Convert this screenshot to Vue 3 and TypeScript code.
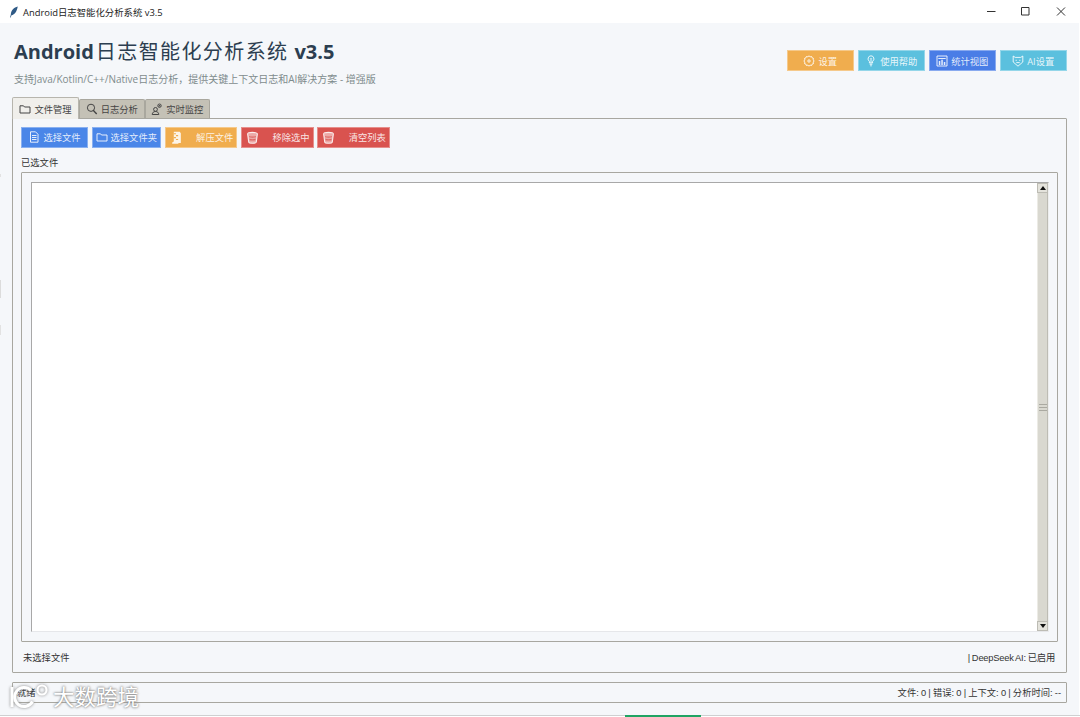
<script setup lang="ts">
const icons: Record<string, string> = {
  file: 'M2.500 .8h5l2.500 2.500v7.900H2.500zM4 4.500h4.500M4 6.500h4.500M4 8.500h4.500',
  folder: 'M1 2.800h3.500l1 1.200H11v6H1z',
  search: 'M5 1.200a3.600 3.600 0 1 0 0 7.200a3.600 3.600 0 0 0 0-7.200z',
  monitor: 'M4.500 4.500a1.900 1.900 0 1 0 0 3.800a1.900 1.900 0 0 0 0-3.800zM1.200 11.500c.2-2 1.300-3 3.300-3s3.100 1 3.300 3zM8.500 1a1.700 1.700 0 1 0 0 3.400a1.700 1.700 0 0 0 0-3.400z',
  zip: 'M3.500 .8h5.500l1 1.300v8.900H8l-.5.8H2v-1.200l1.500-.8z',
  trash: 'M1.500 2.800c0-2 9-2 9 0l-1 7.400c-.4 1.400-6.600 1.400-7 0z',
  gear: 'M6 .8l1.100 1 1.500-.3.500 1.400 1.400.5-.3 1.500 1 1.100-1 1.100.3 1.500-1.400.5-.5 1.400-1.500-.3-1.100 1-1.100-1-1.500.3-.5-1.400-1.400-.5.3-1.500-1-1.100 1-1.100-.3-1.500 1.400-.5.5-1.400 1.500.3zM6 4.800a1.200 1.200 0 1 0 0 2.400a1.200 1.200 0 0 0 0-2.400z',
  bulb: 'M6 .8a3 3 0 0 0-1.600 5.500V8h3.200V6.300A3 3 0 0 0 6 .8zM4.700 9.300h2.600M5.200 10.800h1.600M5.200 3.300L6 4.200l.8-.9M6 4.200V8',
  chart: 'M1 1h10v10H1z',
  bot: 'M1.200 1l2 1.400h5.600l2-1.400v6L6 11.200 1.200 7zM3.600 5.300h1.200M7.200 5.300h1.200M4.300 7.600h3.400',
}

const solids: Record<string, string> = {
  zip: 'M3.500 2h2v1h-2zM5.500 3.800h2v1h-2zM3.500 5.600h2v1h-2zM5.500 7.400h2v1h-2z',
  trash: 'M2.800 4.500c1.700.7 4.700.7 6.400 0l-.2 1.300c-1.700.6-4.300.6-6 0zM3.100 7.200c1.600.6 4.200.6 5.800 0l-.2 1.300c-1.500.5-3.900.5-5.400 0z',
  chart: 'M2.300 3h7.400v.9H2.300zM2.800 6h1.500v4H2.800zM5.300 4.800h1.500V10H5.300zM7.800 7h1.500v3H7.800z',
  search: 'M7.400 6.600l3.800 3.800-1 1L6.500 7.600z',
  monitor: 'M8.500 1.900a.8.8 0 1 0 0 1.600a.8.800 0 0 0 0-1.600z',
}

const tabs = [
  { label: '文件管理', icon: 'folder', active: true },
  { label: '日志分析', icon: 'search', active: false },
  { label: '实时监控', icon: 'monitor', active: false },
]

const topButtons = [
  { label: '设置', icon: 'gear', cls: 'orange t-btn' },
  { label: '使用帮助', icon: 'bulb', cls: 'cyan t-btn' },
  { label: '统计视图', icon: 'chart', cls: 'blue2 t-btn' },
  { label: 'AI设置', icon: 'bot', cls: 'cyan t-btn' },
]

const toolButtons = [
  { label: '选择文件', icon: 'file', cls: 'blue b-file' },
  { label: '选择文件夹', icon: 'folder', cls: 'blue b-folder' },
  { label: '解压文件', icon: 'zip', cls: 'orange b-wide' },
  { label: '移除选中', icon: 'trash', cls: 'red b-wide' },
  { label: '清空列表', icon: 'trash', cls: 'red b-wide' },
]
</script>

<template>
  <div class="window">
    <div class="titlebar">
      <svg class="feather" viewBox="0 0 12 14" width="10" height="14">
        <path d="M10.500 .5C6 1.500 2.500 5 2.200 10l-1 3.500.8.200L3 11c4-.5 6.500-5 7.500-10.500z" fill="#2f5a86" />
      </svg>
      <span class="wintitle">Android日志智能化分析系统 v3.5</span>
      <div class="controls">
        <svg viewBox="0 0 93 12" width="93" height="12" fill="none" stroke="#333" stroke-width="1">
          <path d="M0 5.500h8.500" />
          <path d="M34.500 1.500h7.500v7.500h-7.500z" />
          <path d="M70 1.500l8 8M78 1.500l-8 8" />
        </svg>
      </div>
    </div>

    <div class="main">
      <header class="head">
        <div class="brand">
          <h1 class="title"><b>Android</b><span class="cjk">日志智能化分析系统</span><b class="ver">v3.5</b></h1>
          <p class="subtitle">支持Java/Kotlin/C++/Native日志分析，提供关键上下文日志和AI解决方案 - 增强版</p>
        </div>
        <div class="top-actions">
          <button v-for="b in topButtons" :key="b.label" class="btn" :class="b.cls">
            <svg class="ico" viewBox="0 0 12 12">
              <path :d="icons[b.icon]" />
              <path v-if="solids[b.icon]" class="solid" :d="solids[b.icon]" />
            </svg>
            <span>{{ b.label }}</span>
          </button>
        </div>
      </header>

      <div class="tabs">
        <div v-for="t in tabs" :key="t.label" class="tab" :class="{ active: t.active }">
          <svg class="tab-ico" viewBox="0 0 12 12">
            <path :d="icons[t.icon]" />
            <path v-if="solids[t.icon]" class="tab-solid" :d="solids[t.icon]" />
          </svg>
          <span>{{ t.label }}</span>
        </div>
      </div>

      <section class="panel">
        <div class="toolbar">
          <button v-for="b in toolButtons" :key="b.label" class="btn" :class="b.cls">
            <svg class="ico" :class="b.icon" viewBox="0 0 12 12">
              <path :d="icons[b.icon]" />
              <path v-if="solids[b.icon]" class="solid" :d="solids[b.icon]" />
            </svg>
            <span>{{ b.label }}</span>
          </button>
        </div>
        <div class="group-label">已选文件</div>
        <div class="frame">
          <div class="list">
            <div class="scrollbar">
              <div class="arrow"><i class="tri up"></i></div>
              <div class="thumb"><i class="grip"></i></div>
              <div class="arrow"><i class="tri down"></i></div>
            </div>
          </div>
        </div>
        <div class="panel-foot">
          <span>未选择文件</span>
          <span class="tight">| DeepSeek AI: 已启用</span>
        </div>
      </section>

      <footer class="status">
        <span>就绪</span>
        <span class="tight-s">文件: 0 | 错误: 0 | 上下文: 0 | 分析时间: --</span>
      </footer>
    </div>

    <div class="taskline"><i class="green"></i></div>

    <i class="edge-marks"></i>

    <div class="watermark">
      <svg viewBox="0 0 42 26" width="42" height="26" fill="none" stroke="#fff" stroke-width="3">
        <path d="M2 3v20" />
        <path d="M21 6.500a9.500 9.500 0 1 0 1.500 11" />
        <circle cx="32" cy="6" r="4.500" stroke-width="2.200" />
      </svg>
      <span>大数跨境</span>
    </div>
  </div>
</template>

<style scoped>
.window {
  position: relative;
  width: 1080px;
  height: 717px;
  display: flex;
  flex-direction: column;
  overflow: hidden;
  background: #fff;
  font-family: "Open Sans", "Noto Sans CJK SC", sans-serif;
  color: #333;
}
.titlebar {
  height: 23px;
  flex: none;
  display: flex;
  align-items: center;
  padding-left: 9px;
  background: #fff;
}
.feather { flex: none; }
.wintitle {
  margin-left: 4px;
  font-size: 9.400px;
  color: #222;
}
.controls {
  margin-left: auto;
  height: 12px;
}
.controls svg { display: block; }
.main {
  flex: 1;
  min-height: 0;
  margin-right: 1px;
  padding: 0 12px 12px;
  display: flex;
  flex-direction: column;
  background: #f5f7fa;
}
.head {
  height: 74px;
  flex: none;
  display: flex;
  justify-content: space-between;
}
.brand { padding: 14px 0 0 2px; }
.title {
  margin: 0;
  font-size: 20px;
  line-height: 30px;
  font-weight: 400;
  color: #2c3e50;
}
.title b { font-weight: 700; }
.cjk {
  letter-spacing: 1.400px;
  margin-left: 2px;
  font-weight: 400;
}
.ver { margin-left: 6px; }
.subtitle {
  margin: 5px 0 0;
  font-size: 10px;
  line-height: 14px;
  color: #7f8c8d;
}
.top-actions {
  display: flex;
  gap: 3.500px;
  margin-top: 27px;
  height: 21px;
}
.btn {
  display: flex;
  align-items: center;
  height: 21px;
  margin: 0;
  padding: 0;
  box-sizing: border-box;
  border: 1px solid rgba(255, 255, 255, .35);
  font: inherit;
  font-size: 9.300px;
  color: rgba(255, 255, 255, .86);
  white-space: nowrap;
}
.ico {
  flex: none;
  width: 12px;
  height: 12px;
  fill: none;
  stroke: rgba(255, 255, 255, .86);
  stroke-width: 1;
}
.ico.zip, .ico.trash { width: 13px; height: 13px; }
.ico.zip { stroke: none; fill: rgba(255, 255, 255, .86); }
.ico.trash > path:first-child { fill: rgba(255, 255, 255, .5); }
.solid {
  fill: rgba(255, 255, 255, .86);
  stroke: none;
}
.ico.trash .solid { fill: rgba(217, 83, 79, .75); }
.ico.zip .solid { fill: #f0ad4e; }
.orange { background: #f0ad4e; }
.cyan { background: #5bc0de; }
.blue { background: #4a86e8; }
.blue2 { background: #4a7de6; }
.red { background: #d9534f; }

.t-btn { width: 67.500px; justify-content: center; gap: 3px; }
.toolbar {
  display: flex;
  gap: 3.500px;
  height: 20.500px;
  flex: none;
}
.toolbar .btn { height: 20.500px; }
.b-file { width: 67px; justify-content: center; gap: 3px; }
.b-folder { width: 69.500px; justify-content: center; gap: 3px; }
.b-wide { width: 72.800px; justify-content: space-between; padding: 0 3px 0 4px; }

.tabs {
  height: 21px;
  flex: none;
  display: flex;
  align-items: flex-end;
  font-size: 9.300px;
  position: relative;
  z-index: 1;
}
.tab {
  height: 19px;
  width: 65.500px;
  display: flex;
  align-items: center;
  justify-content: center;
  gap: 3px;
  box-sizing: border-box;
  background: #c4c1b6;
  border: 1px solid #a9a79e;
  border-bottom: none;
  border-radius: 2px 2px 0 0;
  color: #444;
}
.tab.active {
  height: 22px;
  width: 67px;
  margin-bottom: -1px;
  background: #f0efeb;
  border-color: #b7b5ad;
}
.tab-ico {
  flex: none;
  width: 12px;
  height: 12px;
  fill: none;
  stroke: #444;
  stroke-width: 1;
}
.tab-solid { fill: #444; stroke: none; }
.panel {
  flex: 1;
  min-height: 0;
  display: flex;
  flex-direction: column;
  box-sizing: border-box;
  padding: 8px 8px 0;
  border: 1px solid #a8a7a0;
  border-radius: 1px;
}
.group-label {
  height: 24.500px;
  flex: none;
  line-height: 29px;
  font-size: 9.300px;
  color: #333;
}
.frame {
  flex: 1;
  min-height: 0;
  display: flex;
  box-sizing: border-box;
  padding: 9px 8px 9px 9px;
  border: 1px solid #a8a7a0;
  border-radius: 1px;
}
.list {
  flex: 1;
  display: flex;
  justify-content: flex-end;
  background: #fff;
  border: 1px solid #a8a8a8;
  border-right-color: #eee;
  border-bottom-color: #e6e7ea;
}
.scrollbar {
  width: 11px;
  display: flex;
  flex-direction: column;
  background: #d9d8d0;
}
.arrow {
  height: 10px;
  flex: none;
  display: flex;
  align-items: center;
  justify-content: center;
  background: #e4e3dc;
  border: 1px solid #bdbcb4;
  box-sizing: border-box;
}
.tri {
  width: 0;
  height: 0;
  border-left: 3px solid transparent;
  border-right: 3px solid transparent;
}
.tri.up { border-bottom: 4px solid #111; }
.tri.down { border-top: 4px solid #111; }
.thumb {
  flex: 1;
  display: flex;
  align-items: center;
  justify-content: center;
  background: #d9d8d0;
  border-left: 1px solid #ecebe5;
  border-right: 1px solid #bdbcb4;
}
.grip {
  display: block;
  width: 8px;
  height: 5px;
  border-top: 1px solid #aaa9a1;
  border-bottom: 1px solid #aaa9a1;
  background: linear-gradient(#aaa9a1, #aaa9a1) center / 100% 1px no-repeat;
}
.panel-foot {
  height: 30px;
  flex: none;
  display: flex;
  align-items: center;
  justify-content: space-between;
  padding: 0 3px 0 2px;
  font-family: "Liberation Sans", "Noto Sans CJK SC", sans-serif;
  font-size: 9.300px;
  color: #333;
}
.tight { word-spacing: -.5px; letter-spacing: -.2px; }
.status {
  height: 21.500px;
  flex: none;
  margin-top: 8.500px;
  display: flex;
  align-items: center;
  justify-content: space-between;
  box-sizing: border-box;
  padding: 0 5px 0 4px;
  border: 1px solid #a8a7a0;
  border-radius: 1px;
  font-family: "Liberation Sans", "Noto Sans CJK SC", sans-serif;
  font-size: 9.300px;
  color: #333;
}
.tight-s { word-spacing: -.4px; }
.taskline {
  height: 2px;
  flex: none;
  position: relative;
  box-sizing: border-box;
  background: #fff;
  border-top: 1px solid #cfd0d1;
}
.green {
  position: absolute;
  left: 625px;
  top: -1px;
  width: 76px;
  height: 2px;
  background: #1fa463;
}
.edge-marks {
  position: absolute;
  left: 0;
  top: 174px;
  width: 1px;
  height: 162px;
  background: linear-gradient(#e2e2e2, #e2e2e2) 0 0 / 1px 3px no-repeat,
    linear-gradient(#dcdcdc, #dcdcdc) 0 106px / 1px 18px no-repeat,
    linear-gradient(#e2e2e2, #e2e2e2) 0 151px / 1px 10px no-repeat;
}
.watermark {
  position: absolute;
  left: 10px;
  top: 684px;
  display: flex;
  align-items: center;
  gap: 1px;
  font-size: 21.500px;
  line-height: 26px;
  color: #fff;
  text-shadow: 0 0 2px #777, 0 0 3px #999;
}
.watermark svg {
  flex: none;
  filter: drop-shadow(0 0 1.500px #888);
}
</style>

<style>
html, body { margin: 0; padding: 0; background: #fff; }
</style>
